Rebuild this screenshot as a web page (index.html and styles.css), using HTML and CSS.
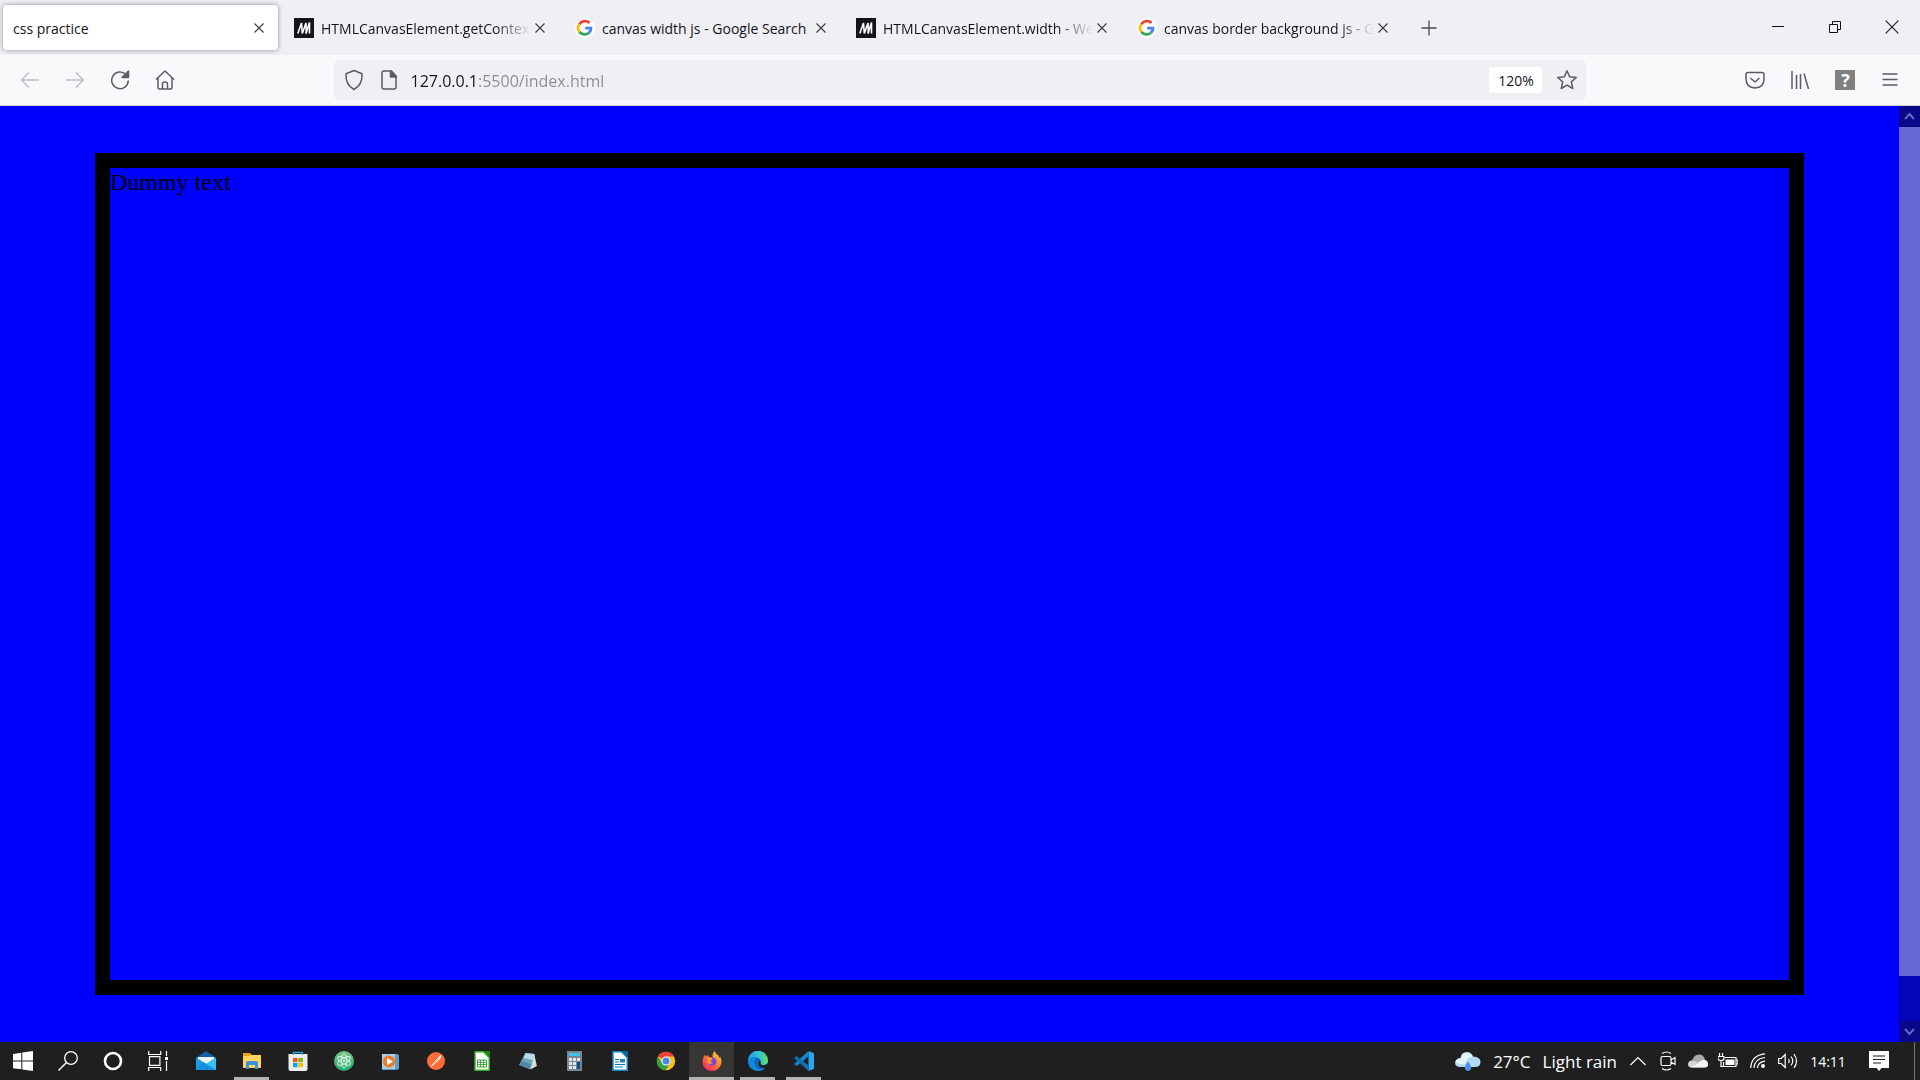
FILE: index.html
```html
<!DOCTYPE html>
<html lang="en">
<head>
  <meta charset="UTF-8" />
  <meta name="viewport" content="width=device-width, initial-scale=1.0" />
  <title>css practice</title>
  <link rel="stylesheet" href="styles.css">
</head>
<body>

  <!-- shared icons -->
  <svg class="sprite" aria-hidden="true">
    <symbol id="close" viewBox="0 0 10 10"><path d="M.5.5l9 9M9.5.5l-9 9" fill="none" stroke="#3a3a40" stroke-width="1.1"/></symbol>
    <symbol id="mdn" viewBox="0 0 20 20"><path d="M0 0h20v20H0z" fill="#15141a"/><path d="M3.800 15.500L7.500 5l.8 10.500L12 5l.3 10.500" fill="none" stroke="#fff" stroke-width="1.600" stroke-linejoin="bevel"/><path d="M12 15.500L15.500 4.500v11" fill="none" stroke="#fff" stroke-width="1.600" stroke-linejoin="bevel"/></symbol>
    <symbol id="google" viewBox="0 0 20 20">
      <circle cx="10" cy="10" r="10" fill="#fff"/>
      <path d="M4.200 6.200A7 7 0 0 1 14.600 4.900" fill="none" stroke="#ea4335" stroke-width="2.800"/>
      <path d="M4.200 6.200A7 7 0 0 0 4.300 13.900" fill="none" stroke="#fbbc05" stroke-width="2.800"/>
      <path d="M4.300 13.900A7 7 0 0 0 14 14.900" fill="none" stroke="#34a853" stroke-width="2.800"/>
      <path d="M10.200 10.100h5.800a6 6 0 0 1-2 4.800" fill="none" stroke="#4285f4" stroke-width="2.800"/>
    </symbol>
  </svg>

  <header class="tab-strip">
    <div class="tab active">
      <button class="tab-title">css practice</button>
      <button class="tab-close" title="Close Tab"><svg width="10" height="10"><use href="#close"/></svg></button>
    </div>
    <div class="tab">
      <svg class="favicon" width="20" height="20"><use href="#mdn"/></svg>
      <button class="tab-title fade">HTMLCanvasElement.getContext</button>
      <button class="tab-close" title="Close Tab"><svg width="10" height="10"><use href="#close"/></svg></button>
    </div>
    <div class="tab">
      <svg class="favicon" width="20" height="20"><use href="#google"/></svg>
      <button class="tab-title">canvas width js - Google Search</button>
      <button class="tab-close" title="Close Tab"><svg width="10" height="10"><use href="#close"/></svg></button>
    </div>
    <div class="tab">
      <svg class="favicon" width="20" height="20"><use href="#mdn"/></svg>
      <button class="tab-title fade">HTMLCanvasElement.width - We</button>
      <button class="tab-close" title="Close Tab"><svg width="10" height="10"><use href="#close"/></svg></button>
    </div>
    <div class="tab">
      <svg class="favicon" width="20" height="20"><use href="#google"/></svg>
      <button class="tab-title fade">canvas border background js - G</button>
      <button class="tab-close" title="Close Tab"><svg width="10" height="10"><use href="#close"/></svg></button>
    </div>
    <button class="new-tab" title="New Tab"><svg width="16" height="16" viewBox="0 0 16 16"><path d="M8 .5v15M.5 8h15" stroke="#4a4a50" stroke-width="1.300"/></svg></button>
    <div class="window-buttons">
      <button title="Minimize"><svg width="14" height="14" viewBox="0 0 14 14"><path d="M1 6.500h12" stroke="#111"/></svg></button>
      <button title="Restore"><svg width="14" height="14" viewBox="0 0 14 14"><path d="M1.500 4.500h8v8h-8zM4.500 4.500v-3h8v8h-3" fill="none" stroke="#111"/></svg></button>
      <button title="Close"><svg width="14" height="14" viewBox="0 0 14 14"><path d="M.7.7l12.600 12.600M13.300.7L.7 13.300" stroke="#222" stroke-width="1.200"/></svg></button>
    </div>
  </header>

  <nav class="toolbar">
    <button class="disabled" title="Back"><svg width="20" height="20" viewBox="0 0 20 20"><path d="M19 10H2M9 2.500L1.500 10 9 17.500"/></svg></button>
    <button class="disabled" title="Forward"><svg width="20" height="20" viewBox="0 0 20 20"><path d="M1 10h17M11 2.500l7.500 7.500-7.500 7.500"/></svg></button>
    <button title="Reload"><svg width="20" height="20" viewBox="0 0 20 20"><path d="M18.300 10.500A8.300 8.300 0 1 1 16 4.600l1 1"/><path class="solid" d="M18.500 1v6.500H12z"/></svg></button>
    <button title="Home"><svg width="20" height="20" viewBox="0 0 20 20"><path d="M1 9.500L10 1l9 8.500M3 8v9.500Q3 19 4.500 19h11q1.500 0 1.500-1.500V8M7.500 19v-5q0-2 2.500-2t2.500 2v5"/></svg></button>
    <div class="spring"></div>
    <div class="urlbar">
      <svg width="20" height="22" viewBox="0 0 20 22"><path d="M10 1.500l8 3.200q.7 10.800-8 15.800-8.700-5-8-15.800z"/></svg>
      <svg class="page-icon" width="18" height="20" viewBox="0 0 18 20"><path d="M11.500 1H4Q2 1 2 3v14q0 2 2 2h10q2 0 2-2V6z"/><path class="solid" d="M10.500 1L16.500 7h-6z"/></svg>
      <input type="text" class="url" aria-label="Address" value="127.0.0.1:5500/index.html">
      <button class="zoom" title="Reset zoom level">120%</button>
      <svg class="star" width="22" height="22" viewBox="0 0 22 22"><path d="M11 1.800l2.600 6 6.600.7-4.900 4.400 1.500 6.600L11 16.200l-5.800 3.300 1.500-6.600L1.800 8.500l6.600-.7z"/></svg>
    </div>
    <div class="spring"></div>
    <button title="Save to Pocket"><svg width="20" height="20" viewBox="0 0 20 20"><path d="M3 2.500h14q2 0 2 2V9q0 8.500-9 9-9-.5-9-9V4.500q0-2 2-2zM5.500 8l4.500 4 4.500-4"/></svg></button>
    <button title="Library"><svg width="20" height="20" viewBox="0 0 20 20"><path d="M2 1v18M6.500 5v14M10.500 4v15M14 3.500L18.500 19"/></svg></button>
    <button class="help" title="Help"><span>?</span></button>
    <button title="Menu"><svg width="20" height="20" viewBox="0 0 20 20"><path d="M2.500 4h15M2.500 9.500h15M2.500 15h15"/></svg></button>
  </nav>

  <div class="viewport">
    <main class="page">
      <div class="box">Dummy text</div>
    </main>
    <div class="scrollbar">
      <button title="Scroll up"><svg width="11" height="9" viewBox="0 0 11 9"><path d="M1 7l4.500-5L10 7"/></svg></button>
      <div class="track"><div class="thumb"></div></div>
      <button title="Scroll down"><svg width="11" height="9" viewBox="0 0 11 9"><path d="M1 2l4.500 5L10 2"/></svg></button>
    </div>
  </div>

  <footer class="taskbar">
    <div class="system">
      <button title="Start"><svg width="20" height="20" viewBox="0 0 20 20"><path d="M0 3l8.300-1.300v7.800H0zM9.300 1.500L20 0v9.500H9.300zM0 10.500h8.300v7.800L0 17.200zM9.300 10.500H20V20L9.300 18.500z" fill="#fff"/></svg></button>
      <button title="Search"><svg width="20" height="20" viewBox="0 0 20 20"><circle cx="13" cy="7" r="6.300" fill="none" stroke="#fff" stroke-width="1.300"/><path d="M8.500 11.500L.5 19.500" stroke="#fff" stroke-width="1.400"/></svg></button>
      <button title="Cortana"><svg width="20" height="20" viewBox="0 0 20 20"><circle cx="10" cy="10" r="8" fill="none" stroke="#fff" stroke-width="2.600"/></svg></button>
      <button title="Task View"><svg width="20" height="20" viewBox="0 0 20 20"><path d="M.7 0v3.500h12V0M.7 20v-3.500h12V20M1.500 5.700h10.400v8.600H1.500zM18.500 0v5M18.500 10v10" fill="none" stroke="#fff" stroke-width="1.200"/><path d="M17 6h3v3h-3z" fill="#fff"/></svg></button>
    </div>
    <div class="apps">
      <button title="Mail"><svg width="20" height="20" viewBox="0 0 20 20"><path d="M0 6.500L10 0l10 6.500V9H0z" fill="#0f5ea8"/><path d="M2 6h16v8H2z" fill="#f4f4f4"/><path d="M0 6.500L20 19H0z" fill="#1b9de2"/><path d="M20 6.500V19H4L0 19z" fill="#36c0f3"/><path d="M0 19l7-8 13 8z" fill="#1490df"/></svg></button>
      <button class="running" title="File Explorer"><svg width="20" height="20" viewBox="0 0 20 20"><path d="M1 2h7l2 2h-9z" fill="#d99a00"/><path d="M1 4h18v13H1z" fill="#ffd45e"/><path d="M1 2h7v3H1z" fill="#e6a50a"/><path d="M4 18v-6q0-2 2-2h8q2 0 2 2v6h-3v-4H7v4z" fill="#3a92dc"/></svg></button>
      <button title="Microsoft Store"><svg width="20" height="20" viewBox="0 0 20 20"><path d="M.5 3h19v15q0 2-2 2h-15q-2 0-2-2z" fill="#eeeeec"/><path d="M5.500 4V1.500h9V4" fill="none" stroke="#29a9e8" stroke-width="1.300"/><path d="M5 7h4.500v4.200H5z" fill="#f35325"/><path d="M10.300 7H15v4.200h-4.700z" fill="#81bc06"/><path d="M5 12h4.500v4.200H5z" fill="#05a6f0"/><path d="M10.300 12H15v4.200h-4.700z" fill="#ffba08"/></svg></button>
      <button title="Atom"><svg width="20" height="20" viewBox="0 0 20 20"><defs><linearGradient id="atom" x2="0" y2="1"><stop stop-color="#7bc389"/><stop offset="1" stop-color="#20b072"/></linearGradient></defs><circle cx="10" cy="10" r="10" fill="url(#atom)"/><g fill="none" stroke="#e4f7e9" stroke-width=".9"><ellipse cx="10" cy="10" rx="2.700" ry="7"/><ellipse cx="10" cy="10" rx="2.700" ry="7" transform="rotate(60 10 10)"/><ellipse cx="10" cy="10" rx="2.700" ry="7" transform="rotate(120 10 10)"/></g><circle cx="10" cy="10" r="1.100" fill="#fff"/></svg></button>
      <button title="Media Player"><svg width="20" height="20" viewBox="0 0 20 20"><path d="M2 3h15l2 1v14l-3 1H2z" fill="#5f9cc0"/><path d="M2 3h13v15H2z" fill="#a9d0e6"/><circle cx="9" cy="10.500" r="6" fill="#f17a25"/><path d="M7 6.800l6 3.700-6 3.800z" fill="#fff"/></svg></button>
      <button title="Postman"><svg width="20" height="20" viewBox="0 0 20 20"><circle cx="10" cy="10" r="9" fill="#ff6c37"/><path d="M4.500 15.500l6-7q3-4 5-4.500.5 2-3 5.500l-7 6z" fill="#fff"/><path d="M8 12l5-5" stroke="#ff6c37" stroke-width=".6"/></svg></button>
      <button title="LibreOffice Calc"><svg width="20" height="20" viewBox="0 0 20 20"><path d="M3 .8h8.500L17.200 6.500v12.700H3z" fill="#fff" stroke="#2cb01d" stroke-width="1.400"/><path d="M11 0h7v6z" fill="#1c8a12"/><path d="M5.500 9h9v7h-9zM5.500 11.300h9M5.500 13.600h9M8.500 9v7M11.500 9v7" fill="none" stroke="#43a047"/></svg></button>
      <button title="Notepad"><svg width="20" height="20" viewBox="0 0 20 20"><path d="M16 3l3 12-6 3z" fill="#c9bfa8"/><path d="M7.500 2l9 1-4 15.500L1 14z" fill="#6ba8bd"/><path d="M7.500 2l9 1-1.500 6-9.500-2z" fill="#b7dbe5"/><path d="M4 10l9 3-1.500 4.500L1.500 14z" fill="#4d8ba5"/><path d="M16.500 3l1.500 12-5.500 3.500z" fill="#d5dfe1"/></svg></button>
      <button title="Calculator"><svg width="20" height="20" viewBox="0 0 20 20"><path d="M3 0h15v20H3z" fill="#7a858e"/><path d="M5 2h11v3H5z" fill="#3fc4f2"/><path d="M5 7h3v3H5zM9 7h3v3H9zM13 7h3v3h-3zM5 11h3v3H5zM9 11h3v3H9zM5 15h3v3H5zM9 15h3v3H9z" fill="#e1e6e9"/><path d="M13 11h3v7h-3z" fill="#0f4c8a"/></svg></button>
      <button title="LibreOffice Writer"><svg width="20" height="20" viewBox="0 0 20 20"><path d="M3 .8h8.500L17.200 6.500v12.700H3z" fill="#fff" stroke="#1489c8" stroke-width="1.400"/><path d="M11 0h7v6z" fill="#0c6496"/><path d="M5 8.500h4M5 11h4M5 13.500h10M5 16h8" stroke="#0d75ae" stroke-width="1.200"/><path d="M10 8h5v3.500h-5z" fill="#2282b8"/></svg></button>
      <button title="Chrome"><svg width="20" height="20" viewBox="0 0 20 20"><circle cx="10" cy="10" r="9.200" fill="#fbc116"/><path d="M10 10L2 5.400A9.200 9.200 0 0 1 18 5.400H10z" fill="#ea4335"/><path d="M2 5.400A9.200 9.200 0 0 0 9.500 19.200L14 12.300 10 10 6 12.300z" fill="#34a044"/><circle cx="10" cy="10" r="4.500" fill="#fff"/><circle cx="10" cy="10" r="3.500" fill="#4285f4"/></svg></button>
      <button class="running current" title="Firefox"><svg width="20" height="20" viewBox="0 0 20 20"><defs><linearGradient id="fox" x1="1" y1="0" x2=".2" y2="1"><stop stop-color="#ffe548"/><stop offset=".45" stop-color="#ff8a2a"/><stop offset="1" stop-color="#f0246b"/></linearGradient></defs><path d="M3 3.500l.8 2L6.500 4 6.300 6q3-.2 4.700 1.500Q9.500 3 12.500 0q1 3 4 4.500Q17 7 17.700 7l.3-1.500Q21 11 18 15.500 15 20 10 20 4 20 1.200 14.500-.8 8.500 3 3.500z" fill="url(#fox)"/><circle cx="10.300" cy="10.500" r="4" fill="#7542e5"/><path d="M6.300 6q2.500.2 4.700 2l-2.500 1.800q0 2 2.500 2-3 2.500-6-.5z" fill="#ff9a2e"/></svg></button>
      <button class="running" title="Edge"><svg width="20" height="20" viewBox="0 0 20 20"><defs><linearGradient id="edge"><stop stop-color="#219be0"/><stop offset=".55" stop-color="#35c1d3"/><stop offset="1" stop-color="#6bdd58"/></linearGradient></defs><circle cx="10" cy="10" r="10" fill="#0b67bd"/><path d="M0 10A10 10 0 0 1 20 9.500q0 4-4 4.500-4 .3-3.500-2Q14 8 9 6.500 3 5.500 0 10z" fill="url(#edge)"/><path d="M9 6.500Q5 10 7.500 15q3.500 5 9.500 2.500Q13 21 7 19.500 0 17 0 10q3-5 9-3.500z" fill="#1488dc"/><path d="M12.500 12q-.5 2.500 3.500 2.200 2 0 4-1.700v3.500q-5 2-8.500-.5-2.500-3 0-6 1.500 1 1 2.500z" fill="#202020"/></svg></button>
      <button class="running" title="Visual Studio Code"><svg width="20" height="20" viewBox="0 0 20 20"><path d="M14.500 0L20 2.300v15.400L14.500 20z" fill="#2aa5f0"/><path d="M14.500 0v5.500L2.500 15 0 13z" fill="#1684cf"/><path d="M0 7l2.500-2 12 9.500V20z" fill="#1070b5"/></svg></button>
    </div>
    <div class="tray">
      <button class="weather">
        <svg width="26" height="20" viewBox="0 0 26 20"><path d="M6 16Q0 16 0 11.500 1 7 5.500 7 6 1 12 1q4.500 0 6 4.500Q25.500 6 25.500 11T20 16z" fill="#b3daf5"/><path d="M6 13q-5 0-5-3 1-2.500 5-2.500Q7 2 12 2q4 0 5.500 4-5 0-6 4t-5.500 3z" fill="#e5f4fd"/><path d="M13 10.500q4 5 3 7.500-.8 2-3 2t-3-2q-1-2.500 3-7.500z" fill="#4c91e6"/></svg>
        <span>27°C</span>
        <span>Light rain</span>
      </button>
      <button title="Show hidden icons"><svg width="16" height="10" viewBox="0 0 16 10"><path d="M.5 9L8 1.500 15.500 9"/></svg></button>
      <button title="Meet Now"><svg width="16" height="20" viewBox="0 0 16 20"><path d="M2.500 5.500h7q1.500 0 1.500 1.500v6q0 1.500-1.500 1.500h-7Q1 14.500 1 13V7q0-1.500 1.500-1.500zM11 9l4-2.500v7L11 11M2 2.500q4.500-3 9 0M2 17.500q4.500 3 9 0"/></svg></button>
      <button title="OneDrive"><svg width="20" height="14" viewBox="0 0 20 14"><path d="M3.500 13.500Q0 13.500 0 10q.5-3.500 4-3.500Q6 .5 11 .5t6 5.500q3 .5 3 4 0 3.500-3.500 3.500z" fill="#a9a9a9" stroke="none"/><path d="M2 12.500L13 7q2.500-2 5-.5 2 1 2 4t-3.500 3h-13z" fill="#f3f3f3" stroke="none"/><path d="M1 8q2-2.500 5-1l5 2-8.500 4.500Q-1 12 1 8z" fill="#d5d5d5" stroke="none"/></svg></button>
      <button title="Battery"><svg width="20" height="16" viewBox="0 0 20 16"><path d="M7 4.500h11v9H5.500V9M18.500 7H20v4h-1.500M1.500 0v3M4.500 0v3M0 3.500h6v2q0 2-3 2t-3-2zM3 7.500v6h2"/><path d="M7.500 6.500h9V12h-9z" fill="#fff" stroke="none"/></svg></button>
      <button title="Wi-Fi"><svg width="16" height="16" viewBox="0 0 16 16"><path d="M.7 15Q1.500 2 15 .8M4 15Q4.500 5.500 15 4.500M7.500 15Q8 9 15 8.200"/><circle cx="13" cy="13" r="2" fill="#fff" stroke="none"/></svg></button>
      <button title="Volume"><svg width="20" height="16" viewBox="0 0 20 16"><path d="M.7 5.500h2.500l4-4v13l-4-4H.7zM10.500 6q1.500 2 0 4M13 3.500q3.500 4.500 0 9M16 1q5 7 0 14"/></svg></button>
      <button class="clock">14:11</button>
      <button class="notifications" title="Notifications"><svg width="20" height="20" viewBox="0 0 20 20"><path d="M0 0h20v17h-7.500L10 20l-2.500-3H0z" fill="#fff" stroke="none"/><path d="M4 5h12M4 8.500h12M4 12h8" stroke="#1f1f1f"/></svg></button>
      <div class="show-desktop"></div>
    </div>
  </footer>

</body>
</html>
```
FILE: styles.css
```css
* {
  box-sizing: border-box;
}
body {
  font-family: "Open Sans", "Noto Sans", sans-serif;
  font-size: 14px;
  margin: 0;
  color: #15141a;
  display: flex;
  flex-direction: column;
  min-height: 100vh;
}
button {
  display: flex;
  align-items: center;
  justify-content: center;
  background: none;
  border: none;
  padding: 0;
  font: inherit;
  color: inherit;
}
svg {
  flex: none;
}
.sprite {
  display: none;
}

/* tabs */
.tab-strip {
  display: flex;
  height: 55px;
  background: #f0eff4;
}
.tab {
  display: flex;
  align-items: center;
  flex: 0 1 275px;
  min-width: 0;
  margin: 5px 3px;
  padding: 0 12px 0 10px;
  border-radius: 4px;
}
.tab.active {
  background: #fff;
  box-shadow: 0 0 5px rgba(0,0,0,0.4);
}
.favicon {
  margin-right: 7px;
}
.tab-title {
  display: block;
  flex: 1;
  min-width: 0;
  padding-top: 2px;
  overflow: hidden;
  white-space: nowrap;
  text-align: left;
}
.tab-title.fade {
  mask-image: linear-gradient(to left, transparent, #000 36px);
}
.tab-close {
  padding: 4px 2px 4px 4px;
}
.new-tab {
  width: 48px;
}
.window-buttons {
  display: flex;
  margin-left: auto;
}
.window-buttons button {
  width: 57px;
  height: 54px;
}

/* toolbar */
.toolbar {
  display: flex;
  align-items: center;
  height: 51px;
  padding: 0 7px;
  background: #f9f9fb;
  border-bottom: 1px solid #cccccf;
}
.toolbar > button {
  width: 45px;
  height: 40px;
}
.toolbar svg {
  fill: none;
  stroke: #5b5b66;
  stroke-width: 1.5;
  stroke-linejoin: round;
}
.toolbar .solid {
  fill: #5b5b66;
}
.toolbar .disabled svg {
  stroke: #bebec3;
}
.spring {
  flex: 7;
}
.urlbar {
  display: flex;
  align-items: center;
  flex: 59;
  height: 40px;
  padding: 0 8px 0 10px;
  border-radius: 5px;
  background: #f0eff4;
}
.page-icon {
  margin: 0 13px 0 16px;
}
/* host is darker than the rest of the address */
.url {
  flex: 1;
  min-width: 0;
  padding: 2px 0 0;
  border: none;
  font: inherit;
  font-size: 16px;
  color: transparent;
  background: linear-gradient(to right, #15141a 68px, #8b8b90 68px);
  background-clip: text;
}
.zoom {
  width: 53px;
  height: 26px;
  margin-right: 14px;
  border-radius: 4px;
  background: #fff;
  font-size: 14px;
}
.help span {
  width: 20px;
  height: 20px;
  background: #808080;
  color: #fff;
  font-size: 18px;
  font-weight: bold;
  line-height: 20px;
}

/* page */
.viewport {
  display: flex;
  flex: 1;
  background: #00f;
}
.page {
  display: flex;
  flex: 1;
}
.box {
  flex: 1;
  margin: 47px 5%;
  border: 15px solid #000;
  font-family: "Liberation Serif", serif;
  font-size: 24px;
  line-height: 28px;
  color: #000;
}
.scrollbar {
  display: flex;
  flex-direction: column;
  width: 21px;
}
.scrollbar button {
  height: 21px;
  background: #080888;
}
.scrollbar path {
  fill: none;
  stroke: #6868c8;
  stroke-width: 2;
}
.track {
  flex: 1;
  background: #0404b8;
}
.thumb {
  height: 95%;
  background: #6868d4;
}

/* taskbar */
.taskbar {
  display: flex;
  height: 38px;
  background: #1f1f1f;
  color: #fff;
}
.system, .apps, .tray {
  display: flex;
}
.system button {
  width: 45px;
}
.apps {
  gap: 1px;
  margin-left: 3px;
}
.apps button {
  position: relative;
  width: 45px;
}
.running::after {
  content: "";
  position: absolute;
  left: 5px;
  right: 5px;
  bottom: 0;
  height: 3px;
  background: #b5b3b0;
}
.current {
  background: #383634;
}
.running.current::after {
  left: 0;
  right: 0;
}
.tray {
  margin-left: auto;
}
.tray button {
  width: 30px;
}
.tray svg {
  fill: none;
  stroke: #fff;
  stroke-width: 1.2;
}
.tray .weather {
  width: auto;
  gap: 12px;
  padding-right: 6px;
  font-size: 17px;
}
.weather svg {
  stroke: none;
}
.tray .clock {
  width: 50px;
}
.tray .notifications {
  width: 52px;
}
.show-desktop {
  width: 6px;
  margin-left: 9px;
  border-left: 1px solid #777;
}
```
